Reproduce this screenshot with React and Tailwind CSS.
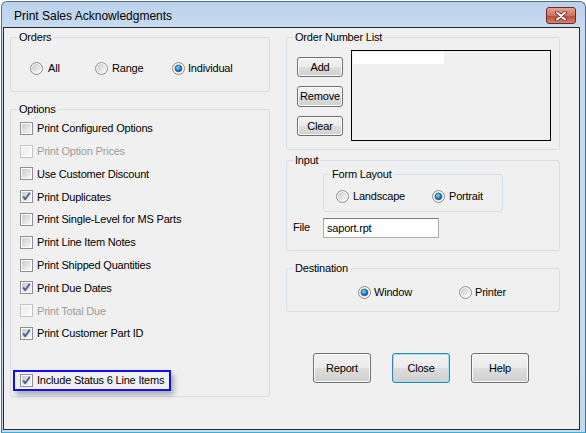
import React, { useId } from "react";

const FONT = "font-['Liberation_Sans',Arial,sans-serif]";

function Radio({ checked }) {
  const id = useId().replace(/:/g, "");
  return (
    <svg width="13" height="13" viewBox="0 0 13 13" className="shrink-0">
      <defs>
        <linearGradient id={`rb${id}`} x1="0" y1="0" x2="1" y2="1">
          <stop offset="0" stopColor="#c9c9c9" />
          <stop offset="1" stopColor="#fbfbfb" />
        </linearGradient>
        <radialGradient id={`rd${id}`} cx="0.4" cy="0.35" r="0.7">
          <stop offset="0" stopColor="#9fe0ff" />
          <stop offset="0.5" stopColor="#2a8fd4" />
          <stop offset="1" stopColor="#0d3f78" />
        </radialGradient>
      </defs>
      <circle cx="6.5" cy="6.5" r="6" fill="#f4f4f4" stroke="#8e8f8f" />
      <circle cx="6.5" cy="6.5" r="4.5" fill={`url(#rb${id})`} />
      {checked && (
        <circle cx="6.5" cy="6.5" r="3.3" fill={`url(#rd${id})`} stroke="#17406e" strokeWidth="0.6" />
      )}
    </svg>
  );
}

function Check({ checked, disabled }) {
  const id = useId().replace(/:/g, "");
  return (
    <svg width="13" height="13" viewBox="0 0 13 13" className="shrink-0">
      <defs>
        <linearGradient id={`cb${id}`} x1="0" y1="0" x2="1" y2="1">
          <stop offset="0" stopColor={disabled ? "#ececec" : "#cbcbcb"} />
          <stop offset="1" stopColor={disabled ? "#fafafa" : "#f7f7f7"} />
        </linearGradient>
      </defs>
      <rect x="0.5" y="0.5" width="12" height="12" fill="#fdfdfd" stroke={disabled ? "#c4c4c4" : "#8f8f8f"} />
      <rect x="2" y="2" width="9" height="9" fill={`url(#cb${id})`} />
      {checked && (
        <path d="M3.2 6.4 L5.2 9.2 L9.8 2.8" fill="none" stroke="#4a5f9c" strokeWidth="1.9" strokeLinejoin="round" />
      )}
    </svg>
  );
}

function Group({ label, className = "", children }) {
  return (
    <fieldset className={`m-0 min-w-0 rounded-[3px] border border-[#d5dfe5] p-0 ${className}`}>
      <legend className="ml-[6px] px-[2px] text-[11px] leading-[14px]">{label}</legend>
      {children}
    </fieldset>
  );
}

function WinButton({ children, className = "", primary }) {
  return (
    <button
      className={`rounded-[3px] border text-[11px] leading-none text-black bg-[linear-gradient(to_bottom,#f2f2f2_0%,#ebebeb_48%,#dddddd_52%,#cfcfcf_100%)] ${
        primary
          ? "border-[#3c7fb1] shadow-[inset_0_0_0_1px_#9fe3fb]"
          : "border-[#707070] shadow-[inset_0_0_0_1px_#fbfbfb]"
      } ${className}`}
    >
      {children}
    </button>
  );
}

const options = [
  { label: "Print Configured Options" },
  { label: "Print Option Prices", disabled: true },
  { label: "Use Customer Discount" },
  { label: "Print Duplicates", checked: true },
  { label: "Print Single-Level for MS Parts" },
  { label: "Print Line Item Notes" },
  { label: "Print Shipped Quantities" },
  { label: "Print Due Dates", checked: true },
  { label: "Print Total Due", disabled: true },
  { label: "Print Customer Part ID", checked: true },
];

export default function App() {
  return (
    <div className={`h-[433px] w-[586px] overflow-hidden bg-white text-black ${FONT}`}>
      <div className="mt-[1px] ml-[1px] flex h-[432px] flex-col rounded-t-[6px] border border-[#51708f] border-b-[#31b0e2] bg-[linear-gradient(to_bottom,#bcd2ec,#c8dbf0_30px,#c4d8ef)]">
        {/* TITLE BAR */}
        <div className="flex h-[25px] shrink-0 items-start justify-between pl-[12px] pr-[9px]">
          <span className="mt-[7px] text-[12px] leading-[15px]">Print Sales Acknowledgments</span>
          <div className="mt-[5px] flex h-[17px] w-[30px] items-center justify-center rounded-[3px] border border-[#6b2a2a] bg-[linear-gradient(to_bottom,#e8a493,#d0705c_50%,#c04a36_55%,#d3826e)]">
            <svg width="12" height="10" viewBox="0 0 12 10">
              <path d="M2 1.5 L10 8.5 M10 1.5 L2 8.5" stroke="#5b2020" strokeWidth="3.6" strokeLinecap="round" />
              <path d="M2 1.5 L10 8.5 M10 1.5 L2 8.5" stroke="#ffffff" strokeWidth="2" strokeLinecap="round" />
            </svg>
          </div>
        </div>

        {/* CLIENT */}
        <div className="mb-[2px] ml-[1px] mr-[5px] flex flex-1 gap-[16px] border border-[#2a2a2a] bg-[#f0f0f0] pl-[6px] pt-[2px] text-[11px] tracking-[-0.2px]">
          {/* LEFT COLUMN */}
          <div className="flex w-[260px] flex-col">
            <Group label="Orders">
              <div className="flex items-center pb-[16px] pl-[19px] pt-[17px] leading-[14px]">
                <div className="flex w-[65px] items-center gap-[5px]">
                  <Radio />
                  <span>All</span>
                </div>
                <div className="flex w-[77px] items-center gap-[4px]">
                  <Radio />
                  <span>Range</span>
                </div>
                <div className="flex items-center gap-[3px]">
                  <Radio checked />
                  <span>Individual</span>
                </div>
              </div>
            </Group>

            <Group label="Options" className="mt-[10px]">
              <div className="flex flex-col pb-[5px] pt-[1px]">
                {options.map((o) => (
                  <div key={o.label} className="flex h-[22.8px] items-center gap-[4px] pl-[9px]">
                    <Check checked={o.checked} disabled={o.disabled} />
                    <span className={o.disabled ? "text-[#9d9d9d]" : ""}>{o.label}</span>
                  </div>
                ))}
                <div className="ml-[2px] mt-[25px] flex h-[21px] w-[158px] items-center gap-[4px] border-2 border-[#1010f5] pl-[5px] shadow-[3px_4px_5px_rgba(0,0,0,0.28)]">
                  <Check checked />
                  <span>Include Status 6 Line Items</span>
                </div>
              </div>
            </Group>
          </div>

          {/* RIGHT COLUMN */}
          <div className="flex w-[274px] flex-col">
            <Group label="Order Number List">
              <div className="flex gap-[8px] pb-[8px] pl-[10px] pt-[6px]">
                <div className="flex flex-col gap-[9px] pt-[7px]">
                  <WinButton className="h-[20px] w-[46px]">Add</WinButton>
                  <WinButton className="h-[21px] w-[46px]">Remove</WinButton>
                  <WinButton className="h-[20px] w-[46px]">Clear</WinButton>
                </div>
                <div className="h-[91px] w-[200px] border border-black bg-[#f0f0f0] p-[1px]">
                  <div className="h-[12px] w-[91px] bg-white" />
                </div>
              </div>
            </Group>

            <Group label="Input" className="mt-[3px]">
              <Group label="Form Layout" className="ml-[36px] w-[180px]">
                <div className="flex items-center pb-[8px] pl-[12px] pt-[8px] leading-[14px]">
                  <div className="flex w-[96px] items-center gap-[4px]">
                    <Radio />
                    <span>Landscape</span>
                  </div>
                  <div className="flex items-center gap-[4px]">
                    <Radio checked />
                    <span>Portrait</span>
                  </div>
                </div>
              </Group>
              <div className="flex items-start pb-[12px] pl-[6px] pt-[6px]">
                <span className="mt-[2px] w-[30px] leading-[14px]">File</span>
                <div className="flex h-[20px] w-[116px] items-center border border-[#abadb3] border-t-[#7b7b7b] bg-white pl-[3px]">
                  saport.rpt
                </div>
              </div>
            </Group>

            <Group label="Destination" className="mt-[10px]">
              <div className="flex items-center pb-[12px] pl-[71px] pt-[10px] leading-[14px]">
                <div className="flex w-[101px] items-center gap-[3px]">
                  <Radio checked />
                  <span>Window</span>
                </div>
                <div className="flex items-center gap-[3px]">
                  <Radio />
                  <span>Printer</span>
                </div>
              </div>
            </Group>

            <div className="ml-[27px] mt-[41px] flex gap-[21px]">
              <WinButton className="h-[30px] w-[58px]">Report</WinButton>
              <WinButton primary className="h-[30px] w-[58px]">Close</WinButton>
              <WinButton className="h-[30px] w-[58px]">Help</WinButton>
            </div>
          </div>
        </div>
      </div>
    </div>
  );
}
